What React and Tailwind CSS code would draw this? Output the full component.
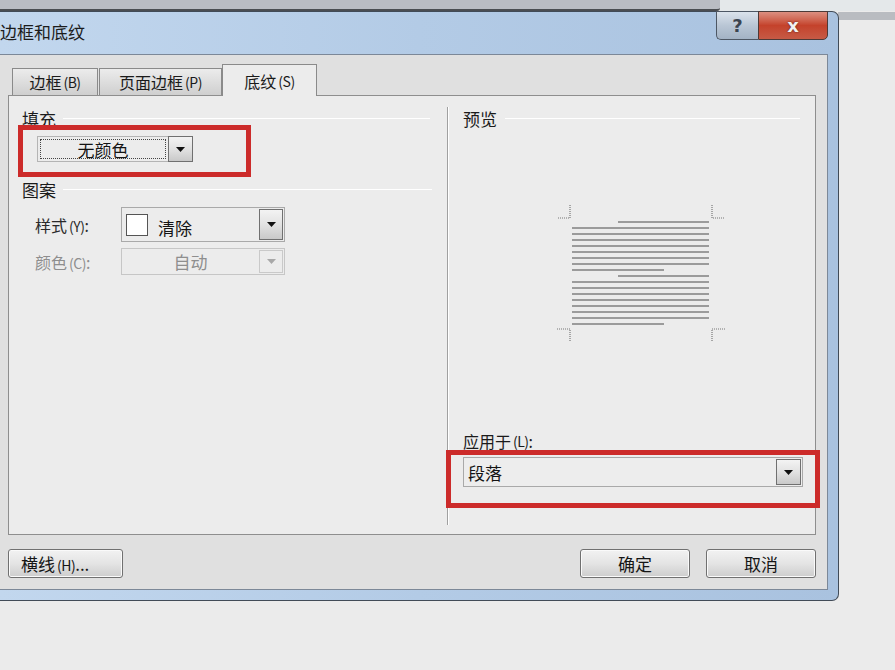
import React from 'react';

const FONT = { fontFamily: '"Noto Sans CJK SC", "Noto Sans", sans-serif' };

// little black triangle inside a combo button
const Arrow = ({ disabled }) => (
  <svg width="9" height="5" viewBox="0 0 9 5">
    <path d="M0 0 H9 L4.5 5 Z" fill={disabled ? '#a8a8a8' : '#111'} />
  </svg>
);

const ComboButton = ({ disabled, className = '' }) => (
  <div
    className={`flex items-center justify-center border ${
      disabled
        ? 'border-[#c9c9c9] bg-[#ececec]'
        : 'border-[#707070] bg-gradient-to-b from-[#f3f3f3] via-[#e2e2e2] to-[#c9c9c9]'
    } ${className}`}
  >
    <Arrow disabled={disabled} />
  </div>
);

const Key = ({ k }) => <span className="text-[14px] tracking-[-0.5px] ml-[2px]">({k})</span>;

const GroupLabel = ({ text, lineClass }) => (
  <div className="flex items-center h-[22px]">
    <span className="text-[17px] leading-none text-[#1b1b1b]">{text}</span>
    <div className={`h-px bg-[#d2d2d2] border-b border-white ${lineClass}`} />
  </div>
);

const PushButton = ({ children, className = '' }) => (
  <button
    className={`h-[29px] rounded-[3px] border border-[#707070] bg-gradient-to-b from-[#f2f2f2] via-[#e4e4e4] to-[#cdcdcd] text-[17px] leading-none text-[#151515] shadow-[inset_0_0_0_1px_#fafafa] ${className}`}
  >
    {children}
  </button>
);

// preview page drawing
const Preview = () => {
  const lines = [];
  for (let k = 0; k < 18; k++) {
    const y = 18 + k * 6;
    let x1 = 16;
    let x2 = 153;
    if (k === 0 || k === 9) x1 = 62;
    if (k === 8 || k === 17) x2 = 108;
    lines.push(<rect key={k} x={x1} y={y - 1} width={x2 - x1} height="2" fill="#9b9b9b" />);
  }
  const dot = { stroke: '#777', strokeWidth: 1.2, strokeDasharray: '1 1', fill: 'none' };
  return (
    <svg width="172" height="140" viewBox="0 0 172 140">
      <path d="M14 1 V14 H1" {...dot} />
      <path d="M156 1 V14 H169" {...dot} />
      <path d="M1 125 H14 V138" {...dot} />
      <path d="M169 125 H156 V138" {...dot} />
      {lines}
    </svg>
  );
};

export default function App() {
  return (
    <div className="relative w-[895px] h-[670px] overflow-hidden bg-[#ebebeb]" style={FONT}>
      {/* desktop behind */}
      <div className="flex h-[11px]">
        <div className="w-[720px] bg-[#b9bcc3] border-b-2 border-[#4a4d52] rounded-br-[3px]" />
        <div className="flex-1 bg-[#e4e8ea]" />
      </div>
      <div className="absolute left-[838px] top-[12px] w-[57px] h-[8px] bg-[#b9bcc1]" />

      {/* dialog window */}
      <div className="absolute left-0 top-[11px] w-[839px] h-[590px] rounded-tr-[7px] rounded-br-[7px] border border-l-0 border-[#414b57] bg-gradient-to-r from-[#c2d7ee] via-[#b3cbe6] to-[#a9c2df] flex flex-col">
        {/* title bar */}
        <div className="relative h-[42px] flex items-center">
          <span className="text-[17px] text-[#1c1c1c] -mt-[3px]">边框和底纹</span>
          <div className="absolute right-[10px] top-[-1px] flex">
            <div className="w-[42px] h-[29px] rounded-bl-[5px] border border-r-0 border-[#4d5764] bg-gradient-to-b from-[#dbe3ec] via-[#b9c6d5] to-[#a3b3c5] flex items-center justify-center">
              <span className="text-[18px] font-bold text-[#3b4450] leading-none" style={{ fontFamily: '"DejaVu Sans", sans-serif' }}>?</span>
            </div>
            <div className="w-[70px] h-[29px] rounded-br-[5px] border border-[#4d3a37] bg-gradient-to-b from-[#dc8f80] via-[#c4422b] to-[#c65a45] flex items-center justify-center">
              <span className="text-[18px] font-bold text-[#f2f2f2] leading-none" style={{ fontFamily: '"DejaVu Sans", sans-serif', textShadow: '0 0 2px #4a1a12' }}>x</span>
            </div>
          </div>
        </div>

        {/* client area */}
        <div className="w-[828px] h-[536px] bg-[#e0e0e0] border-t border-r border-b border-[#7c8898] flex flex-col">
          {/* tabs */}
          <div className="flex items-end h-[40px] pl-[12px]">
            <div className="h-[27px] w-[86px] border border-b-0 border-[#8a8a8a] bg-gradient-to-b from-[#ececec] to-[#cfcfcf] flex items-center justify-center text-[16px] leading-none text-[#1a1a1a]">
              边框<Key k="B" />
            </div>
            <div className="h-[27px] w-[123px] ml-[1px] border border-b-0 border-[#8a8a8a] bg-gradient-to-b from-[#ececec] to-[#cfcfcf] flex items-center justify-center text-[16px] leading-none text-[#1a1a1a]">
              页面边框<Key k="P" />
            </div>
            <div className="relative z-10 -mb-px h-[32px] w-[95px] border border-b-0 border-[#8a8a8a] bg-[#ececec] flex items-center justify-center text-[16px] leading-none text-[#1a1a1a]">
              底纹<Key k="S" />
            </div>
          </div>

          {/* tab panel */}
          <div className="ml-[8px] w-[808px] h-[440px] border border-[#8e8e8e] bg-[#ececec] flex">
            {/* left column */}
            <div className="w-[438px] pt-[11px] pl-[13px] flex flex-col">
              <GroupLabel text="填充" lineClass="ml-[7px] w-[367px]" />
              <div className="mt-[7px] ml-[15px] w-[156px] h-[26px] border border-[#b4b4b4] flex">
                <div className="flex-1 m-[2px] border border-dotted border-[#444] flex items-center justify-center text-[17px] leading-none text-[#141414]">
                  无颜色
                </div>
                <ComboButton className="w-[25px] -my-px -mr-px" />
              </div>

              <div className="mt-[16px]">
                <GroupLabel text="图案" lineClass="ml-[7px] w-[369px]" />
              </div>

              <div className="mt-[7px] flex items-center">
                <span className="w-[99px] pl-[13px] text-[16px] leading-none text-[#2a2a2a]">
                  样式<Key k="Y" />:
                </span>
                <div className="w-[164px] h-[35px] border border-[#a9a9a9] flex items-stretch">
                  <div className="w-[22px] h-[22px] ml-[4px] self-center border border-[#555] bg-white" />
                  <span className="ml-[10px] mt-[5px] self-center text-[17px] leading-none text-[#141414]">清除</span>
                  <div className="flex-1" />
                  <ComboButton className="w-[24px] my-[1px] mr-[1px]" />
                </div>
              </div>

              <div className="mt-[6px] flex items-center">
                <span className="w-[99px] pl-[13px] text-[16px] leading-none text-[#8e8e8e]">
                  颜色<Key k="C" />:
                </span>
                <div className="w-[164px] h-[27px] border border-[#c6c6c6] flex items-stretch">
                  <span className="flex-1 flex items-center justify-center text-[17px] leading-none text-[#8e8e8e]">自动</span>
                  <ComboButton disabled className="w-[24px] my-[1px] mr-[1px]" />
                </div>
              </div>
            </div>

            {/* separator */}
            <div className="w-[2px] mt-[11px] mb-[9px] border-l border-[#a0a0a0] bg-white" />

            {/* right column */}
            <div className="flex-1 pt-[11px] pl-[14px] pr-[12px] flex flex-col">
              <GroupLabel text="预览" lineClass="ml-[8px] w-[295px]" />
              <div className="mt-[75px] ml-[93px]">
                <Preview />
              </div>
              <div className="mt-[86px] h-[22px] flex items-center text-[16px] leading-none text-[#1b1b1b]">
                应用于<Key k="L" />:
              </div>
              <div className="mt-[5px] h-[30px] border border-[#a9a9a9] bg-[#ededed] flex items-stretch">
                <span className="flex-1 flex items-center pl-[4px] text-[17px] leading-none text-[#141414]">段落</span>
                <ComboButton className="w-[25px] my-[1px] mr-[1px]" />
              </div>
            </div>
          </div>

          {/* bottom buttons */}
          <div className="mt-[14px] pl-[8px] pr-[11px] flex items-center">
            <PushButton className="w-[115px] text-left pl-[12px]">
              横线<Key k="H" />...
            </PushButton>
            <div className="flex-1" />
            <PushButton className="w-[110px]">确定</PushButton>
            <PushButton className="w-[110px] ml-[16px]">取消</PushButton>
          </div>
        </div>
      </div>

      {/* red annotation boxes */}
      <div className="absolute left-[18px] top-[125px] w-[233px] h-[52px] border-[5px] border-[#cc2b2a]" />
      <div className="absolute left-[446px] top-[450px] w-[374px] h-[58px] border-[5px] border-[#cc2b2a]" />
    </div>
  );
}
